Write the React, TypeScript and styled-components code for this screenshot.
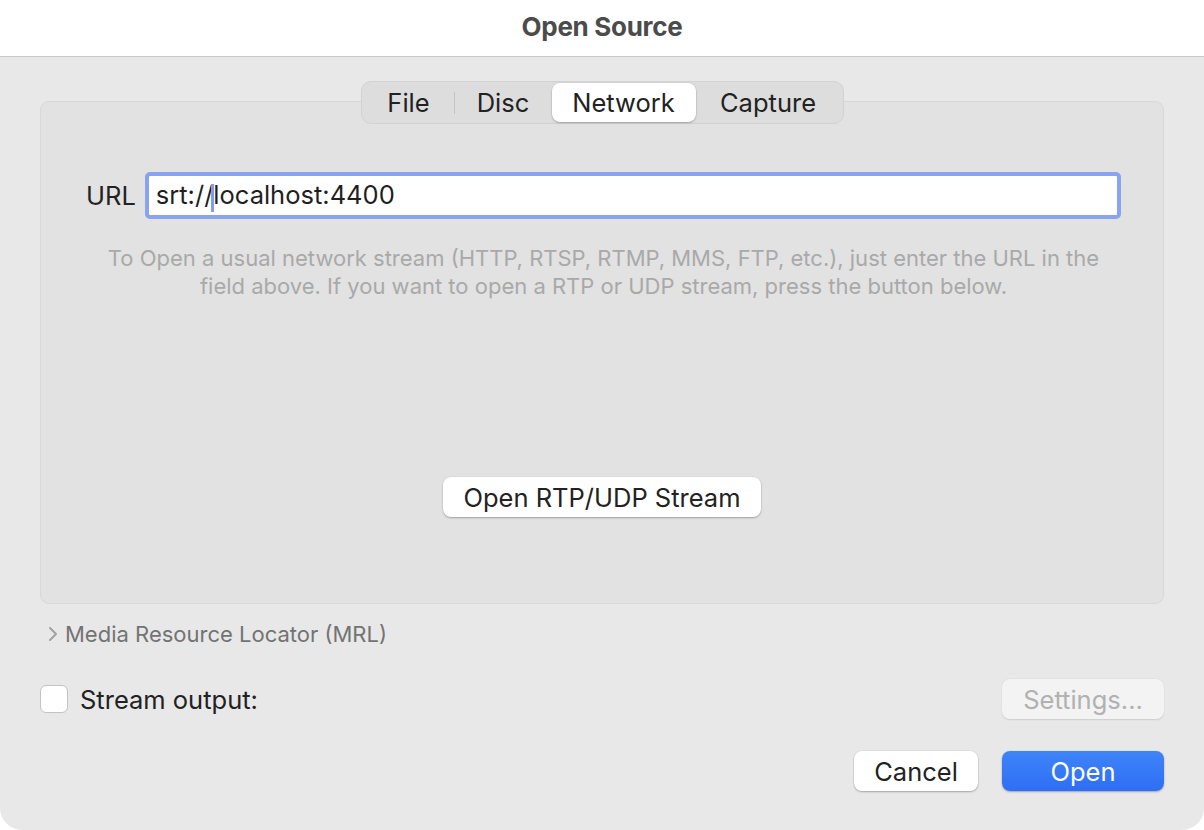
import styled, { createGlobalStyle } from "styled-components";

const GlobalStyle = createGlobalStyle`
  html, body {
    margin: 0;
    padding: 0;
    background: #ffffff;
  }
  body {
    font-family: Inter, "Liberation Sans", "Noto Sans", sans-serif;
    -webkit-font-smoothing: antialiased;
  }
`

const Window = styled.div`
  width: 1204px;
  height: 830px;
  display: flex;
  flex-direction: column;
  background: #e8e8e8;
  border-bottom-left-radius: 22px;
  border-bottom-right-radius: 22px;
  overflow: hidden;
  box-sizing: border-box;
`

const TitleBar = styled.div`
  height: 57px;
  flex-shrink: 0;
  box-sizing: border-box;
  padding-bottom: 3px;
  background: #ffffff;
  border-bottom: 1px solid #c9c9c9;
  display: flex;
  align-items: center;
  justify-content: center;
  font-size: 26px;
  font-weight: 700;
  color: #4b4b4b;
  letter-spacing: -0.3px;
`

const Body = styled.div`
  flex: 1;
  display: flex;
  flex-direction: column;
  padding: 24px 40px 0;
`

const PanelArea = styled.div`
  display: flex;
  flex-direction: column;
  align-items: center;
`

const Segmented = styled.div`
  position: relative;
  z-index: 1;
  display: flex;
  align-items: center;
  height: 43px;
  box-sizing: border-box;
  padding: 2px;
  background: #dddddd;
  border: 1px solid #d2d2d2;
  border-radius: 10px;
  margin-bottom: -23px;
`

const Segment = styled.div<{ $active?: boolean; $w: number }>`
  width: ${(p) => p.$w}px;
  height: 39px;
  display: flex;
  align-items: center;
  justify-content: center;
  font-size: 25.5px;
  color: #222222;
  border-radius: 8px;
  background: ${(p) => (p.$active ? "#ffffff" : "transparent")};
  box-shadow: ${(p) =>
    p.$active ? "0 1px 2px rgba(0,0,0,0.25), 0 0 0 0.5px rgba(0,0,0,0.06)" : "none"};
`

const Divider = styled.div`
  width: 1px;
  height: 22px;
  background: #c4c4c4;
`

const Panel = styled.div`
  align-self: stretch;
  height: 503px;
  box-sizing: border-box;
  background: #e2e2e2;
  border: 1px solid #d8d8d8;
  border-radius: 9px;
  display: flex;
  flex-direction: column;
  padding: 72px 42px 0 45px;
`

const UrlRow = styled.div`
  display: flex;
  align-items: center;
  gap: 9px;
  margin-top: -2px;
`

const Label = styled.span`
  font-size: 25.5px;
  color: #222222;
`

const UrlField = styled.div`
  flex: 1;
  height: 47px;
  box-sizing: border-box;
  border: 4px solid #8aa3ee;
  border-radius: 5px;
  background: #ffffff;
  display: flex;
  align-items: center;
  padding-left: 7px;
  font-size: 25.5px;
  color: #1f1f1f;
`

const Caret = styled.span`
  display: inline-block;
  width: 3px;
  height: 28px;
  background: #7f9ef0;
  margin: 0 -1px 0 -2px;
  vertical-align: middle;
`

const Help = styled.p`
  margin: 25px 0 0;
  text-align: center;
  font-size: 22px;
  line-height: 28px;
  color: #a9a9a9;
`

const CenterRow = styled.div`
  display: flex;
  justify-content: center;
  margin-top: 177px;
  padding-right: 3px;
`

const PushButton = styled.div<{ $w: number; $tone?: "default" | "primary" | "disabled" }>`
  width: ${(p) => p.$w}px;
  height: 40px;
  box-sizing: border-box;
  display: flex;
  align-items: center;
  justify-content: center;
  font-size: 25.5px;
  border-radius: 8px;
  color: ${(p) =>
    p.$tone === "primary" ? "#ffffff" : p.$tone === "disabled" ? "#b1b1b1" : "#222222"};
  background: ${(p) =>
    p.$tone === "primary"
      ? "linear-gradient(#3f84f8, #2e6ef5)"
      : p.$tone === "disabled"
      ? "#f3f3f3"
      : "#ffffff"};
  box-shadow: ${(p) =>
    p.$tone === "disabled"
      ? "0 0.5px 1.5px rgba(0,0,0,0.12)"
      : "0 1px 2px rgba(0,0,0,0.28), 0 0 0 0.5px rgba(0,0,0,0.05)"};
`

const Disclosure = styled.div`
  display: flex;
  align-items: center;
  gap: 7px;
  margin: 17px 0 0 8px;
  font-size: 22px;
  color: #737373;
`

const StreamRow = styled.div`
  display: flex;
  align-items: center;
  justify-content: space-between;
  margin-top: 32px;
`

const CheckLabel = styled.label`
  display: flex;
  align-items: center;
  gap: 12px;
  font-size: 25.5px;
  color: #222222;
`

const CheckBox = styled.span`
  width: 28px;
  height: 28px;
  box-sizing: border-box;
  border-radius: 6px;
  border: 1px solid #c3c3c3;
  background: #ffffff;
`

const Footer = styled.div`
  display: flex;
  justify-content: flex-end;
  gap: 24px;
  margin-top: 32px;
`

export default function App() {
  return (
    <>
      <GlobalStyle />
      <Window>
        <TitleBar>Open Source</TitleBar>
        <Body>
          <PanelArea>
            <Segmented>
              <Segment $w={90}>File</Segment>
              <Divider />
              <Segment $w={97}>Disc</Segment>
              <Segment $w={144} $active>Network</Segment>
              <Segment $w={145}>Capture</Segment>
            </Segmented>
            <Panel>
              <UrlRow>
                <Label>URL</Label>
                <UrlField>
                  <span>
                    srt://<Caret />localhost:4400
                  </span>
                </UrlField>
              </UrlRow>
              <Help>
                To Open a usual network stream (HTTP, RTSP, RTMP, MMS, FTP, etc.), just enter the URL in the
                <br />
                field above. If you want to open a RTP or UDP stream, press the button below.
              </Help>
              <CenterRow>
                <PushButton $w={318}>Open RTP/UDP Stream</PushButton>
              </CenterRow>
            </Panel>
          </PanelArea>
          <Disclosure>
            <svg width="10" height="16" viewBox="0 0 10 16">
              <path d="M2 2 L8 8 L2 14" fill="none" stroke="#a2a2a2" strokeWidth="2" strokeLinecap="round" strokeLinejoin="round" />
            </svg>
            Media Resource Locator (MRL)
          </Disclosure>
          <StreamRow>
            <CheckLabel>
              <CheckBox />
              Stream output:
            </CheckLabel>
            <PushButton $w={162} $tone="disabled">Settings...</PushButton>
          </StreamRow>
          <Footer>
            <PushButton $w={124}>Cancel</PushButton>
            <PushButton $w={162} $tone="primary">Open</PushButton>
          </Footer>
        </Body>
      </Window>
    </>
  )
}
